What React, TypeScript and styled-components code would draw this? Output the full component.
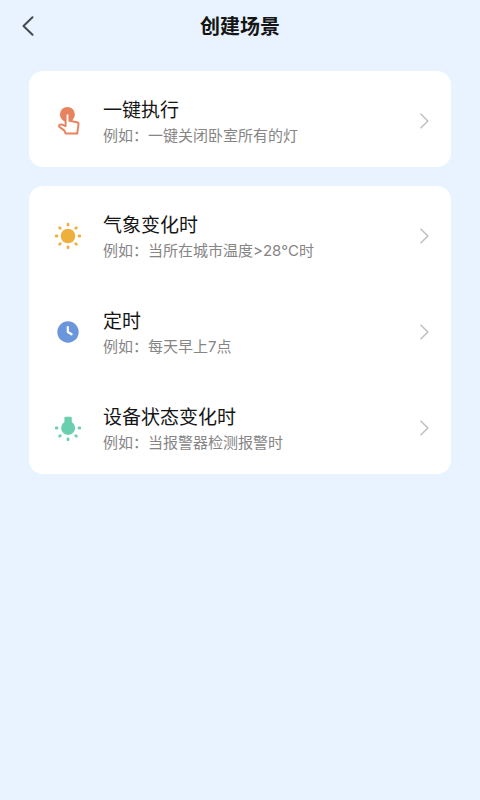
import React from "react";
import styled, { createGlobalStyle } from "styled-components";

const GlobalStyle = createGlobalStyle`
  *, *::before, *::after { box-sizing: border-box; }
  body {
    margin: 0;
    background: #e8f3ff;
    color: #151515;
    font-family: Inter, "Noto Sans CJK SC", sans-serif;
  }
  button { font: inherit; color: inherit; }
`;

const Page = styled.div`
  min-height: 100vh;
`;

const Header = styled.header`
  display: grid;
  grid-template-columns: 56px 1fr 56px;
  align-items: center;
  height: 51px;
`;

const BackButton = styled.button`
  display: flex;
  align-items: center;
  justify-content: center;
  height: 44px;
  padding: 0;
  border: 0;
  background: none;
  cursor: pointer;
`;

const Title = styled.h1`
  margin: 0;
  padding-top: 2px;
  text-align: center;
  font-size: 20px;
  line-height: 28px;
  font-weight: 700;
`;

const Main = styled.main`
  display: flex;
  flex-direction: column;
  gap: 19px;
  padding: 20px 29px;
`;

const Card = styled.section`
  overflow: hidden;
  border-radius: 14px;
  background: #fff;
`;

const Row = styled.button`
  display: flex;
  align-items: center;
  width: 100%;
  height: 96px;
  padding: 4px 20px 0 24px;
  border: 0;
  background: none;
  text-align: left;
  cursor: pointer;
`;

const IconSlot = styled.span`
  display: flex;
  flex: none;
  width: 50px;
  height: 30px;

  svg { display: block; }
`;

const RowText = styled.span`
  display: flex;
  flex: 1;
  flex-direction: column;
  min-width: 0;
  padding-top: 4px;
`;

const RowTitle = styled.span`
  font-size: 19px;
  line-height: 26px;
`;

const RowHint = styled.span`
  font-size: 15px;
  line-height: 24px;
  color: #858585;
`;

const TapIcon = () => (
  <svg width="30" height="30" viewBox="0 0 30 30" aria-hidden="true">
    <circle cx="14.4" cy="8.4" r="7.5" fill="#e8835f" />
    <path
      d="M12.6 9.2a1.9 1.9 0 0 1 3.8 0v5.6l7.6 1.5q1.7.4 1.5 2L24.200 27.600H12.700l-1.500-3.200-4.700-3.400q-1-.9-.2-1.900 1-1 3-.4l3.300 1.400z"
      fill="#fff"
      stroke="#e8835f"
      strokeWidth="2"
      strokeLinejoin="round"
    />
  </svg>
);

const Rays = ({ angles, color, cy }: { angles: number[]; color: string; cy: number }) => (
  <g stroke={color} strokeWidth="2.8" strokeLinecap="round">
    {angles.map((a) => (
      <path key={a} d={`M15 ${cy - 11}v-.8`} transform={`rotate(${a} 15 ${cy})`} />
    ))}
  </g>
);

const SunIcon = () => (
  <svg width="30" height="30" viewBox="0 0 30 30" aria-hidden="true">
    <circle cx="15" cy="15" r="7.3" fill="#edaf3e" />
    <Rays angles={[0, 45, 90, 135, 180, 225, 270, 315]} color="#edaf3e" cy={15} />
  </svg>
);

const ClockIcon = () => (
  <svg width="30" height="30" viewBox="0 0 30 30" aria-hidden="true">
    <circle cx="15" cy="15" r="10.7" fill="#6c96dc" />
    <path
      d="M14.8 10v5l3.800 2.300"
      fill="none"
      stroke="#fff"
      strokeWidth="2.2"
      strokeLinecap="round"
      strokeLinejoin="round"
    />
  </svg>
);

const BulbIcon = () => (
  <svg width="30" height="30" viewBox="0 0 30 30" aria-hidden="true">
    <path
      d="M12.600 3.800h5q1.200 0 1.200 1.200v4.100a7 7 0 1 1-7.400 0V5q0-1.200 1.200-1.200z"
      fill="#69cfaf"
    />
    <Rays angles={[90, 135, 180, 225, 270]} color="#69cfaf" cy={15} />
  </svg>
);

const BackIcon = () => (
  <svg width="12" height="20" viewBox="0 0 12 20" aria-hidden="true">
    <path
      d="M10.5 1.2 1.5 10l9 8.800"
      fill="none"
      stroke="#444a50"
      strokeWidth="2"
      strokeLinecap="round"
      strokeLinejoin="round"
    />
  </svg>
);

const Chevron = () => (
  <svg width="14" height="16" viewBox="0 0 14 16" aria-hidden="true">
    <path d="M3.5.8 10.8 8l-7.300 7.200" fill="none" stroke="#c0c0c0" strokeWidth="1.5" />
  </svg>
);

interface Scene {
  title: string;
  hint: string;
  icon: React.ReactNode;
}

const groups: Scene[][] = [
  [{ title: "一键执行", hint: "例如：一键关闭卧室所有的灯", icon: <TapIcon /> }],
  [
    { title: "气象变化时", hint: "例如：当所在城市温度>28°C时", icon: <SunIcon /> },
    { title: "定时", hint: "例如：每天早上7点", icon: <ClockIcon /> },
    { title: "设备状态变化时", hint: "例如：当报警器检测报警时", icon: <BulbIcon /> },
  ],
];

export default function App() {
  return (
    <Page lang="zh-CN">
      <GlobalStyle />
      <Header>
        <BackButton type="button" aria-label="返回">
          <BackIcon />
        </BackButton>
        <Title>创建场景</Title>
      </Header>
      <Main>
        {groups.map((scenes) => (
          <Card key={scenes[0].title}>
            {scenes.map((scene) => (
              <Row key={scene.title} type="button">
                <IconSlot>{scene.icon}</IconSlot>
                <RowText>
                  <RowTitle>{scene.title}</RowTitle>
                  <RowHint>{scene.hint}</RowHint>
                </RowText>
                <Chevron />
              </Row>
            ))}
          </Card>
        ))}
      </Main>
    </Page>
  );
}
